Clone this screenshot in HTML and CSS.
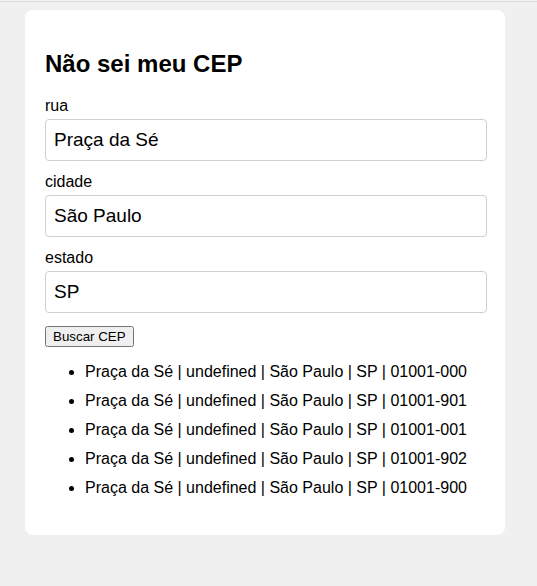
FILE: index.html
```html
<!DOCTYPE html>
<html lang="pt-BR">
<head>
<meta charset="utf-8">
<title>Não sei meu CEP</title>
<link rel="stylesheet" href="styles.css">
</head>
<body>
<div class="topline"></div>
<main class="card">
  <h2 class="title">Não sei meu CEP</h2>
  <label class="label" for="rua">rua</label>
  <input class="field" id="rua" type="text" value="Praça da Sé">
  <label class="label" for="cidade">cidade</label>
  <input class="field" id="cidade" type="text" value="São Paulo">
  <label class="label" for="estado">estado</label>
  <input class="field" id="estado" type="text" value="SP">
  <button class="btn" type="button">Buscar CEP</button>
  <ul class="results">
    <li>Praça da Sé | undefined | São Paulo | SP | 01001-000</li>
    <li>Praça da Sé | undefined | São Paulo | SP | 01001-901</li>
    <li>Praça da Sé | undefined | São Paulo | SP | 01001-001</li>
    <li>Praça da Sé | undefined | São Paulo | SP | 01001-902</li>
    <li>Praça da Sé | undefined | São Paulo | SP | 01001-900</li>
  </ul>
</main>
</body>
</html>
```
FILE: styles.css
```css
html, body {
  margin: 0;
  padding: 0;
}
body {
  background: #f0f0f0;
  font-family: "Liberation Sans", Arial, sans-serif;
  font-size: 16px;
  color: #000;
  min-height: 586px;
}
.topline {
  height: 1px;
  margin-top: 1px;
  background: #dcdcdc;
}
.card {
  display: flow-root;
  box-sizing: border-box;
  width: 480px;
  margin: 8px 0 0 25px;
  padding: 20px 18px 22px 20px;
  background: #fff;
  border-radius: 8px;
}
.title {
  font-size: 24px;
  font-weight: bold;
  margin: 20px 0 19px;
}
.label {
  display: block;
  font-size: 16px;
  margin-bottom: 4px;
}
.field {
  display: block;
  box-sizing: border-box;
  width: 442px;
  height: 42px;
  margin: 0 0 12px;
  padding: 0 8px;
  border: 1px solid #cfcfcf;
  border-radius: 4px;
  font-family: "Liberation Sans", Arial, sans-serif;
  font-size: 19px;
  color: #000;
  background: #fff;
}
.btn {
  display: block;
  margin-top: 13px;
  font-family: "Liberation Sans", Arial, sans-serif;
  font-size: 13.333px;
}
.results {
  margin: 16px 0;
  padding-left: 40px;
}
.results li {
  margin-bottom: 11px;
}
```
